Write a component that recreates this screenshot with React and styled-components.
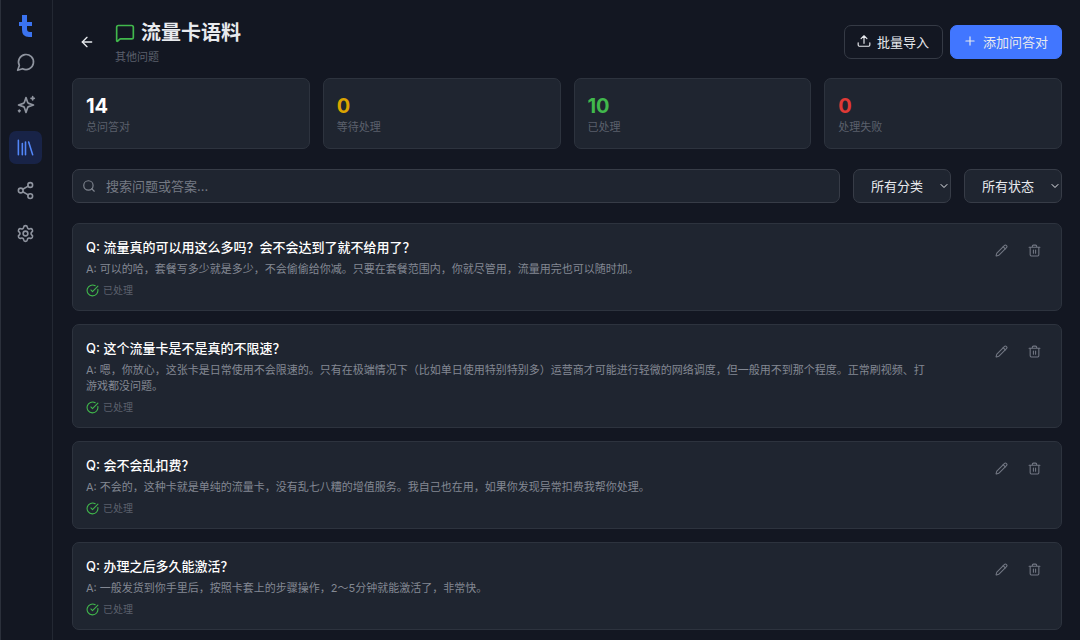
import { useState } from 'react';
import styled, { createGlobalStyle } from 'styled-components';
import {
  ArrowLeft,
  ChevronDown,
  CircleCheckBig,
  Pencil,
  Plus,
  Search,
  Settings,
  Share2,
} from 'lucide-react';

const stats = [
  { value: 14, label: '总问答对', color: '#ffffff' },
  { value: 0, label: '等待处理', color: '#dba400' },
  { value: 10, label: '已处理', color: '#41b84c' },
  { value: 0, label: '处理失败', color: '#e03a36' },
];

const pairs = [
  {
    id: 1,
    question: '流量真的可以用这么多吗？会不会达到了就不给用了？',
    answer: '可以的哈，套餐写多少就是多少，不会偷偷给你减。只要在套餐范围内，你就尽管用，流量用完也可以随时加。',
  },
  {
    id: 2,
    question: '这个流量卡是不是真的不限速？',
    answer: '嗯，你放心，这张卡是日常使用不会限速的。只有在极端情况下（比如单日使用特别特别多）运营商才可能进行轻微的网络调度，但一般用不到那个程度。正常刷视频、打游戏都没问题。',
  },
  {
    id: 3,
    question: '会不会乱扣费？',
    answer: '不会的，这种卡就是单纯的流量卡，没有乱七八糟的增值服务。我自己也在用，如果你发现异常扣费我帮你处理。',
  },
  {
    id: 4,
    question: '办理之后多久能激活？',
    answer: '一般发货到你手里后，按照卡套上的步骤操作，2～5分钟就能激活了，非常快。',
  },
];

function Logo() {
  return (
    <svg width="14" height="22" viewBox="0 0 14 22" fill="#3b73f0" aria-hidden="true">
      <path d="M3 0h5v7h5v4H8v3q0 3 3 3h2v5h-3q-7 0-7-7v-4H0V7h3z" />
    </svg>
  );
}

function Icon({ size, color = 'currentColor', d }) {
  return (
    <svg width={size} height={size} viewBox="0 0 24 24" fill="none" stroke={color} strokeWidth="2" strokeLinecap="round" strokeLinejoin="round" aria-hidden="true">
      <path d={d} />
    </svg>
  );
}

const chatPath = 'M7.9 20A9 9 0 1 0 4 16.1L2 22Z';
const sparklesPath = 'M12 3l-1.9 5.8a2 2 0 0 1-1.3 1.3L3 12l5.8 1.9a2 2 0 0 1 1.3 1.3L12 21l1.9-5.8a2 2 0 0 1 1.3-1.3L21 12l-5.8-1.9a2 2 0 0 1-1.3-1.3zM20 2v4M22 4h-4M4 18v2M5 19H3';
const libraryPath = 'M3 3v18M8 7v14M12 5v16M16 5l5 16';
const messagePath = 'M22 17a2 2 0 0 1-2 2H6.8a2 2 0 0 0-1.4.6l-2.2 2.2A.7.7 0 0 1 2 21.3V5a2 2 0 0 1 2-2h16a2 2 0 0 1 2 2z';
const uploadPath = 'M12 16V3M7 8l5-5 5 5M2 15v4a2 2 0 0 0 2 2h16a2 2 0 0 0 2-2v-4';
const trashPath = 'M2 6h20M4 6v14a2 2 0 0 0 2 2h12a2 2 0 0 0 2-2V6M8 6V4a2 2 0 0 1 2-2h4a2 2 0 0 1 2 2v2M10 11v6M14 11v6';

export default function App() {
  const [search, setSearch] = useState('');
  const [category, setCategory] = useState('all');
  const [status, setStatus] = useState('all');

  const visible = pairs.filter((p) => p.question.includes(search) || p.answer.includes(search));

  return (
    <>
      <GlobalStyle />
      <Layout>
        <Sidebar aria-label="主导航">
          <LogoLink href="#home" aria-label="首页"><Logo /></LogoLink>
          <NavLink href="#chat" aria-label="对话"><Icon size={20} d={chatPath} /></NavLink>
          <NavLink href="#agents" aria-label="智能体"><Icon size={20} d={sparklesPath} /></NavLink>
          <NavLink href="#library" aria-label="知识库" $active><Icon size={19} d={libraryPath} /></NavLink>
          <NavLink href="#share" aria-label="分享"><Share2 size={19} /></NavLink>
          <NavLink href="#settings" aria-label="设置"><Settings size={19} /></NavLink>
        </Sidebar>
        <Main>
          <Header>
            <BackButton aria-label="返回"><ArrowLeft size={16} /></BackButton>
            <Heading>
              <Title><Icon size={20} color="#41b84c" d={messagePath} />流量卡语料</Title>
              <Subtitle>其他问题</Subtitle>
            </Heading>
            <Actions>
              <Button><Icon size={14} d={uploadPath} />批量导入</Button>
              <Button $primary><Plus size={14} />添加问答对</Button>
            </Actions>
          </Header>
          <Stats>
            {stats.map((s) => (
              <StatCard key={s.label}>
                <StatValue $color={s.color}>{s.value}</StatValue>
                <StatLabel>{s.label}</StatLabel>
              </StatCard>
            ))}
          </Stats>
          <Filters>
            <SearchBox>
              <Search size={14} />
              <SearchInput
                aria-label="搜索"
                placeholder="搜索问题或答案..."
                value={search}
                onChange={(e) => setSearch(e.target.value)}
              />
            </SearchBox>
            <SelectBox>
              <Select aria-label="分类" value={category} onChange={(e) => setCategory(e.target.value)}>
                <option value="all">所有分类</option>
              </Select>
              <ChevronDown size={12} />
            </SelectBox>
            <SelectBox>
              <Select aria-label="状态" value={status} onChange={(e) => setStatus(e.target.value)}>
                <option value="all">所有状态</option>
              </Select>
              <ChevronDown size={12} />
            </SelectBox>
          </Filters>
          <List>
            {visible.map((p) => (
              <Card key={p.id}>
                <CardBody>
                  <Question>Q: {p.question}</Question>
                  <Answer>A: {p.answer}</Answer>
                  <Status><CircleCheckBig size={13} />已处理</Status>
                </CardBody>
                <CardActions>
                  <IconButton aria-label="编辑"><Pencil size={13} /></IconButton>
                  <IconButton aria-label="删除"><Icon size={13} d={trashPath} /></IconButton>
                </CardActions>
              </Card>
            ))}
          </List>
        </Main>
      </Layout>
    </>
  );
}

const GlobalStyle = createGlobalStyle`
  * {
    box-sizing: border-box;
  }

  body {
    margin: 0;
    background: #131722;
    color: #e8eaee;
    font-family: Inter, "Noto Sans CJK SC", sans-serif;
    font-size: 13px;
  }

  button, input, select {
    font: inherit;
    color: inherit;
  }

  h1, h2, p {
    margin: 0;
    font-weight: 400;
  }

  svg {
    display: block;
    flex-shrink: 0;
  }
`

const Layout = styled.div`
  display: flex;
  height: 100vh;
  overflow: hidden;
  border-left: 1px solid #2b303b;
`

const Sidebar = styled.nav`
  width: 52px;
  flex-shrink: 0;
  padding: 15px 2px 0 0;
  display: flex;
  flex-direction: column;
  align-items: center;
  border-right: 1px solid #232833;
`

const LogoLink = styled.a`
  margin-bottom: 8px;
`

const NavLink = styled.a`
  width: 33px;
  height: 33px;
  margin-bottom: 10px;
  display: flex;
  align-items: center;
  justify-content: center;
  border-radius: 7px;
  color: ${(p) => (p.$active ? '#5286f8' : '#8f949f')};
  background: ${(p) => (p.$active ? '#182347' : 'transparent')};
`

const Main = styled.main`
  flex: 1;
  min-width: 0;
  padding: 20px 18px 0 19px;
  overflow: hidden;
`

const Header = styled.header`
  display: flex;
  align-items: center;
  height: 44px;
  margin-bottom: 14px;
`

const BackButton = styled.button`
  width: 30px;
  height: 30px;
  padding: 0;
  margin-right: 13px;
  display: flex;
  align-items: center;
  justify-content: center;
  background: none;
  border: none;
  cursor: pointer;
`

const Heading = styled.div`
  flex: 1;
  padding-top: 2px;
`

const Title = styled.h1`
  display: flex;
  align-items: center;
  gap: 6px;
  font-size: 20px;
  line-height: 26px;
  font-weight: 600;
`

const Subtitle = styled.p`
  margin-top: 2px;
  font-size: 11px;
  line-height: 18px;
  color: #5b606c;
`

const Actions = styled.div`
  display: flex;
  gap: 7px;
`

const Button = styled.button`
  height: 34px;
  padding: 0 13px 2px 12px;
  display: flex;
  align-items: center;
  gap: 6px;
  border-radius: 7px;
  border: 1px solid ${(p) => (p.$primary ? '#4176ff' : '#353a45')};
  background: ${(p) => (p.$primary ? '#4176ff' : 'transparent')};
  cursor: pointer;
`

const Stats = styled.section`
  display: grid;
  grid-template-columns: repeat(4, 1fr);
  gap: 13px;
  margin-bottom: 20px;
`

const StatCard = styled.div`
  padding: 15px 13px 11px;
  border: 1px solid #2d333e;
  border-radius: 7px;
  background: #1f2530;
`

const StatValue = styled.div`
  font-size: 20px;
  line-height: 24px;
  font-weight: 700;
  color: ${(p) => p.$color};
`

const StatLabel = styled.div`
  font-size: 11px;
  line-height: 19px;
  color: #5b606c;
`

const Filters = styled.div`
  display: flex;
  gap: 13px;
  margin-bottom: 20px;
`

const SearchBox = styled.label`
  flex: 1;
  height: 34px;
  padding: 0 9px;
  display: flex;
  align-items: center;
  gap: 10px;
  border: 1px solid #373c47;
  border-radius: 7px;
  background: #1f2530;
  color: #7f848e;
`

const SearchInput = styled.input`
  flex: 1;
  min-width: 0;
  padding: 0;
  border: none;
  outline: none;
  background: none;
  color: #e8eaee;

  &::placeholder {
    color: #757a84;
  }
`

const SelectBox = styled.div`
  position: relative;
  width: 98px;

  svg {
    position: absolute;
    top: 11px;
    right: 1px;
    pointer-events: none;
  }
`

const Select = styled.select`
  appearance: none;
  width: 100%;
  height: 34px;
  padding: 0 17px;
  border: 1px solid #373c47;
  border-radius: 7px;
  background: #1f2530;
`

const List = styled.section`
  display: flex;
  flex-direction: column;
  gap: 13px;
`

const Card = styled.article`
  display: flex;
  justify-content: space-between;
  padding: 13px 13px 12px;
  border: 1px solid #2d333e;
  border-radius: 7px;
  background: #1f2530;
`

const CardBody = styled.div`
  flex: 1;
  min-width: 0;
  padding-right: 54px;
`

const Question = styled.h2`
  font-size: 13px;
  line-height: 20px;
  font-weight: 500;
  color: #ffffff;
`

const Answer = styled.p`
  margin-top: 4px;
  font-size: 11px;
  line-height: 16px;
  color: #838893;
`

const Status = styled.div`
  margin-top: 5px;
  display: flex;
  align-items: center;
  gap: 4px;
  font-size: 10px;
  line-height: 16px;
  color: #5b606c;

  svg {
    color: #41b84c;
  }
`

const CardActions = styled.div`
  display: flex;
  align-items: flex-start;
  gap: 6px;
`

const IconButton = styled.button`
  padding: 7px;
  border: none;
  background: none;
  color: #727783;
  cursor: pointer;
`
